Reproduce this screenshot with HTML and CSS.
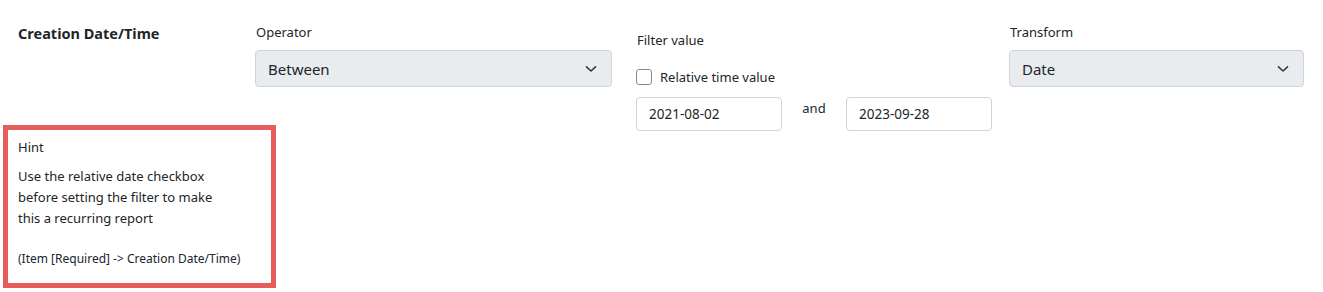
FILE: index.html
```html
<!DOCTYPE html>
<html>
<head>
<meta charset="utf-8">
<link rel="stylesheet" href="styles.css">
</head>
<body>
<div class="filter-row">
  <div class="col-name">
    <div class="field-title">Creation Date/Time</div>
    <div class="hint-box">
      <div class="hint-head">Hint</div>
      <div class="hint-body">Use the relative date checkbox<br>before setting the filter to make<br>this a recurring report</div>
      <div class="hint-path">(Item [Required] -&gt; Creation Date/Time)</div>
    </div>
  </div>
  <div class="col-op">
    <div class="lbl">Operator</div>
    <div class="select">
      <span>Between</span>
      <svg class="chev" width="12" height="8" viewBox="0 0 12 8"><path d="M1.5 1.8 L6 6 L10.5 1.8" fill="none" stroke="#343a40" stroke-width="1.6" stroke-linecap="round" stroke-linejoin="round"/></svg>
    </div>
  </div>
  <div class="col-filter">
    <div class="lbl lbl-filter">Filter value</div>
    <label class="check-row"><span class="checkbox"></span><span>Relative time value</span></label>
    <div class="range">
      <div class="input">2021-08-02</div>
      <div class="and">and</div>
      <div class="input">2023-09-28</div>
    </div>
  </div>
  <div class="col-tr">
    <div class="lbl">Transform</div>
    <div class="select">
      <span>Date</span>
      <svg class="chev" width="12" height="8" viewBox="0 0 12 8"><path d="M1.5 1.8 L6 6 L10.5 1.8" fill="none" stroke="#343a40" stroke-width="1.6" stroke-linecap="round" stroke-linejoin="round"/></svg>
    </div>
  </div>
</div>
</body>
</html>
```

FILE: styles.css
```css
html, body {
  margin: 0;
  padding: 0;
  background: #fff;
}
body {
  font-family: "Noto Sans", "Open Sans", sans-serif;
  color: #212529;
  font-size: 14px;
}
.filter-row {
  display: flex;
  align-items: flex-start;
  padding: 22px 0 0 3px;
}
.col-name {
  width: 252px;
  flex: none;
}
.field-title {
  font-weight: bold;
  font-size: 14.5px;
  line-height: 22px;
  padding-left: 15px;
}
.hint-box {
  width: 253px;
  margin-top: 81px;
  border: 5px solid #e85c5c;
  padding: 7px 0 15px 10px;
  font-size: 13px;
  line-height: 21px;
}
.hint-head {
  margin-bottom: 8px;
}
.hint-body {
  margin-bottom: 21px;
}
.hint-path {
  font-size: 12px;
  line-height: 18px;
}
.col-op {
  width: 357px;
  flex: none;
}
.col-filter {
  width: 357px;
  flex: none;
  margin-left: 24px;
}
.col-tr {
  width: 295px;
  flex: none;
  margin-left: 16px;
}
.lbl {
  font-size: 13px;
  line-height: 20px;
  padding-left: 1px;
  margin-bottom: 8px;
}
.lbl-filter {
  margin-top: 8px;
  margin-bottom: 19px;
}
.select {
  box-sizing: border-box;
  height: 37px;
  background: #e9ecef;
  border: 1px solid #ced4da;
  border-radius: 4px;
  display: flex;
  align-items: center;
  justify-content: space-between;
  padding: 0 14px 0 12px;
  font-size: 15px;
}
.check-row {
  display: flex;
  align-items: center;
  gap: 8px;
  font-size: 13px;
  height: 16px;
}
.checkbox {
  box-sizing: border-box;
  width: 16px;
  height: 16px;
  border: 1.5px solid #8a8a8a;
  border-radius: 3px;
  background: #fff;
}
.range {
  display: flex;
  align-items: flex-start;
  margin-top: 12px;
}
.input {
  box-sizing: border-box;
  width: 146px;
  height: 34px;
  border: 1px solid #ced4da;
  border-radius: 4px;
  padding: 0 12px;
  display: flex;
  align-items: center;
  font-size: 13.5px;
}
.and {
  width: 64px;
  text-align: center;
  font-size: 13px;
  line-height: 20px;
  padding-top: 1px;
}
```
